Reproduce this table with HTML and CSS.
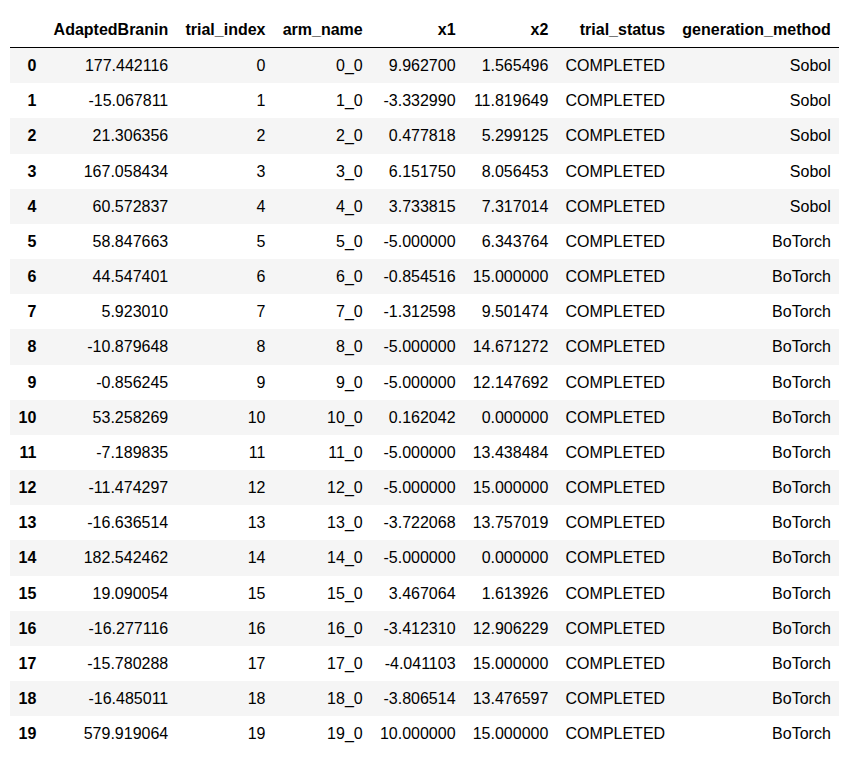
FILE: index.html
```html
<!DOCTYPE html>
<html>
<head>
<meta charset="utf-8">
<link rel="stylesheet" href="styles.css">
</head>
<body>
<table class="dataframe">
<thead>
<tr><th></th><th>AdaptedBranin</th><th>trial_index</th><th>arm_name</th><th>x1</th><th>x2</th><th>trial_status</th><th>generation_method</th></tr>
</thead>
<tbody>
<tr><th>0</th><td>177.442116</td><td>0</td><td>0_0</td><td>9.962700</td><td>1.565496</td><td>COMPLETED</td><td>Sobol</td></tr>
<tr><th>1</th><td>-15.067811</td><td>1</td><td>1_0</td><td>-3.332990</td><td>11.819649</td><td>COMPLETED</td><td>Sobol</td></tr>
<tr><th>2</th><td>21.306356</td><td>2</td><td>2_0</td><td>0.477818</td><td>5.299125</td><td>COMPLETED</td><td>Sobol</td></tr>
<tr><th>3</th><td>167.058434</td><td>3</td><td>3_0</td><td>6.151750</td><td>8.056453</td><td>COMPLETED</td><td>Sobol</td></tr>
<tr><th>4</th><td>60.572837</td><td>4</td><td>4_0</td><td>3.733815</td><td>7.317014</td><td>COMPLETED</td><td>Sobol</td></tr>
<tr><th>5</th><td>58.847663</td><td>5</td><td>5_0</td><td>-5.000000</td><td>6.343764</td><td>COMPLETED</td><td>BoTorch</td></tr>
<tr><th>6</th><td>44.547401</td><td>6</td><td>6_0</td><td>-0.854516</td><td>15.000000</td><td>COMPLETED</td><td>BoTorch</td></tr>
<tr><th>7</th><td>5.923010</td><td>7</td><td>7_0</td><td>-1.312598</td><td>9.501474</td><td>COMPLETED</td><td>BoTorch</td></tr>
<tr><th>8</th><td>-10.879648</td><td>8</td><td>8_0</td><td>-5.000000</td><td>14.671272</td><td>COMPLETED</td><td>BoTorch</td></tr>
<tr><th>9</th><td>-0.856245</td><td>9</td><td>9_0</td><td>-5.000000</td><td>12.147692</td><td>COMPLETED</td><td>BoTorch</td></tr>
<tr><th>10</th><td>53.258269</td><td>10</td><td>10_0</td><td>0.162042</td><td>0.000000</td><td>COMPLETED</td><td>BoTorch</td></tr>
<tr><th>11</th><td>-7.189835</td><td>11</td><td>11_0</td><td>-5.000000</td><td>13.438484</td><td>COMPLETED</td><td>BoTorch</td></tr>
<tr><th>12</th><td>-11.474297</td><td>12</td><td>12_0</td><td>-5.000000</td><td>15.000000</td><td>COMPLETED</td><td>BoTorch</td></tr>
<tr><th>13</th><td>-16.636514</td><td>13</td><td>13_0</td><td>-3.722068</td><td>13.757019</td><td>COMPLETED</td><td>BoTorch</td></tr>
<tr><th>14</th><td>182.542462</td><td>14</td><td>14_0</td><td>-5.000000</td><td>0.000000</td><td>COMPLETED</td><td>BoTorch</td></tr>
<tr><th>15</th><td>19.090054</td><td>15</td><td>15_0</td><td>3.467064</td><td>1.613926</td><td>COMPLETED</td><td>BoTorch</td></tr>
<tr><th>16</th><td>-16.277116</td><td>16</td><td>16_0</td><td>-3.412310</td><td>12.906229</td><td>COMPLETED</td><td>BoTorch</td></tr>
<tr><th>17</th><td>-15.780288</td><td>17</td><td>17_0</td><td>-4.041103</td><td>15.000000</td><td>COMPLETED</td><td>BoTorch</td></tr>
<tr><th>18</th><td>-16.485011</td><td>18</td><td>18_0</td><td>-3.806514</td><td>13.476597</td><td>COMPLETED</td><td>BoTorch</td></tr>
<tr><th>19</th><td>579.919064</td><td>19</td><td>19_0</td><td>10.000000</td><td>15.000000</td><td>COMPLETED</td><td>BoTorch</td></tr>
</tbody>
</table>
</body>
</html>
```
FILE: styles.css
```css
html, body {
  margin: 0;
  padding: 0;
  background: #ffffff;
}
body {
  padding: 12px 0 0 10px;
  font-family: "Liberation Sans", Arial, sans-serif;
  font-size: 16px;
  color: #000000;
}
.dataframe {
  border-collapse: collapse;
  border-spacing: 0;
  border: none;
}
.dataframe th,
.dataframe td {
  text-align: right;
  vertical-align: middle;
  padding: 8px 8.6px;
  line-height: 19.16px;
  white-space: nowrap;
  border: none;
}
.dataframe th {
  font-weight: bold;
}
.dataframe thead tr {
  border-bottom: 1px solid #000000;
}
.dataframe tbody tr:nth-child(odd) {
  background: #f5f5f5;
}
```
